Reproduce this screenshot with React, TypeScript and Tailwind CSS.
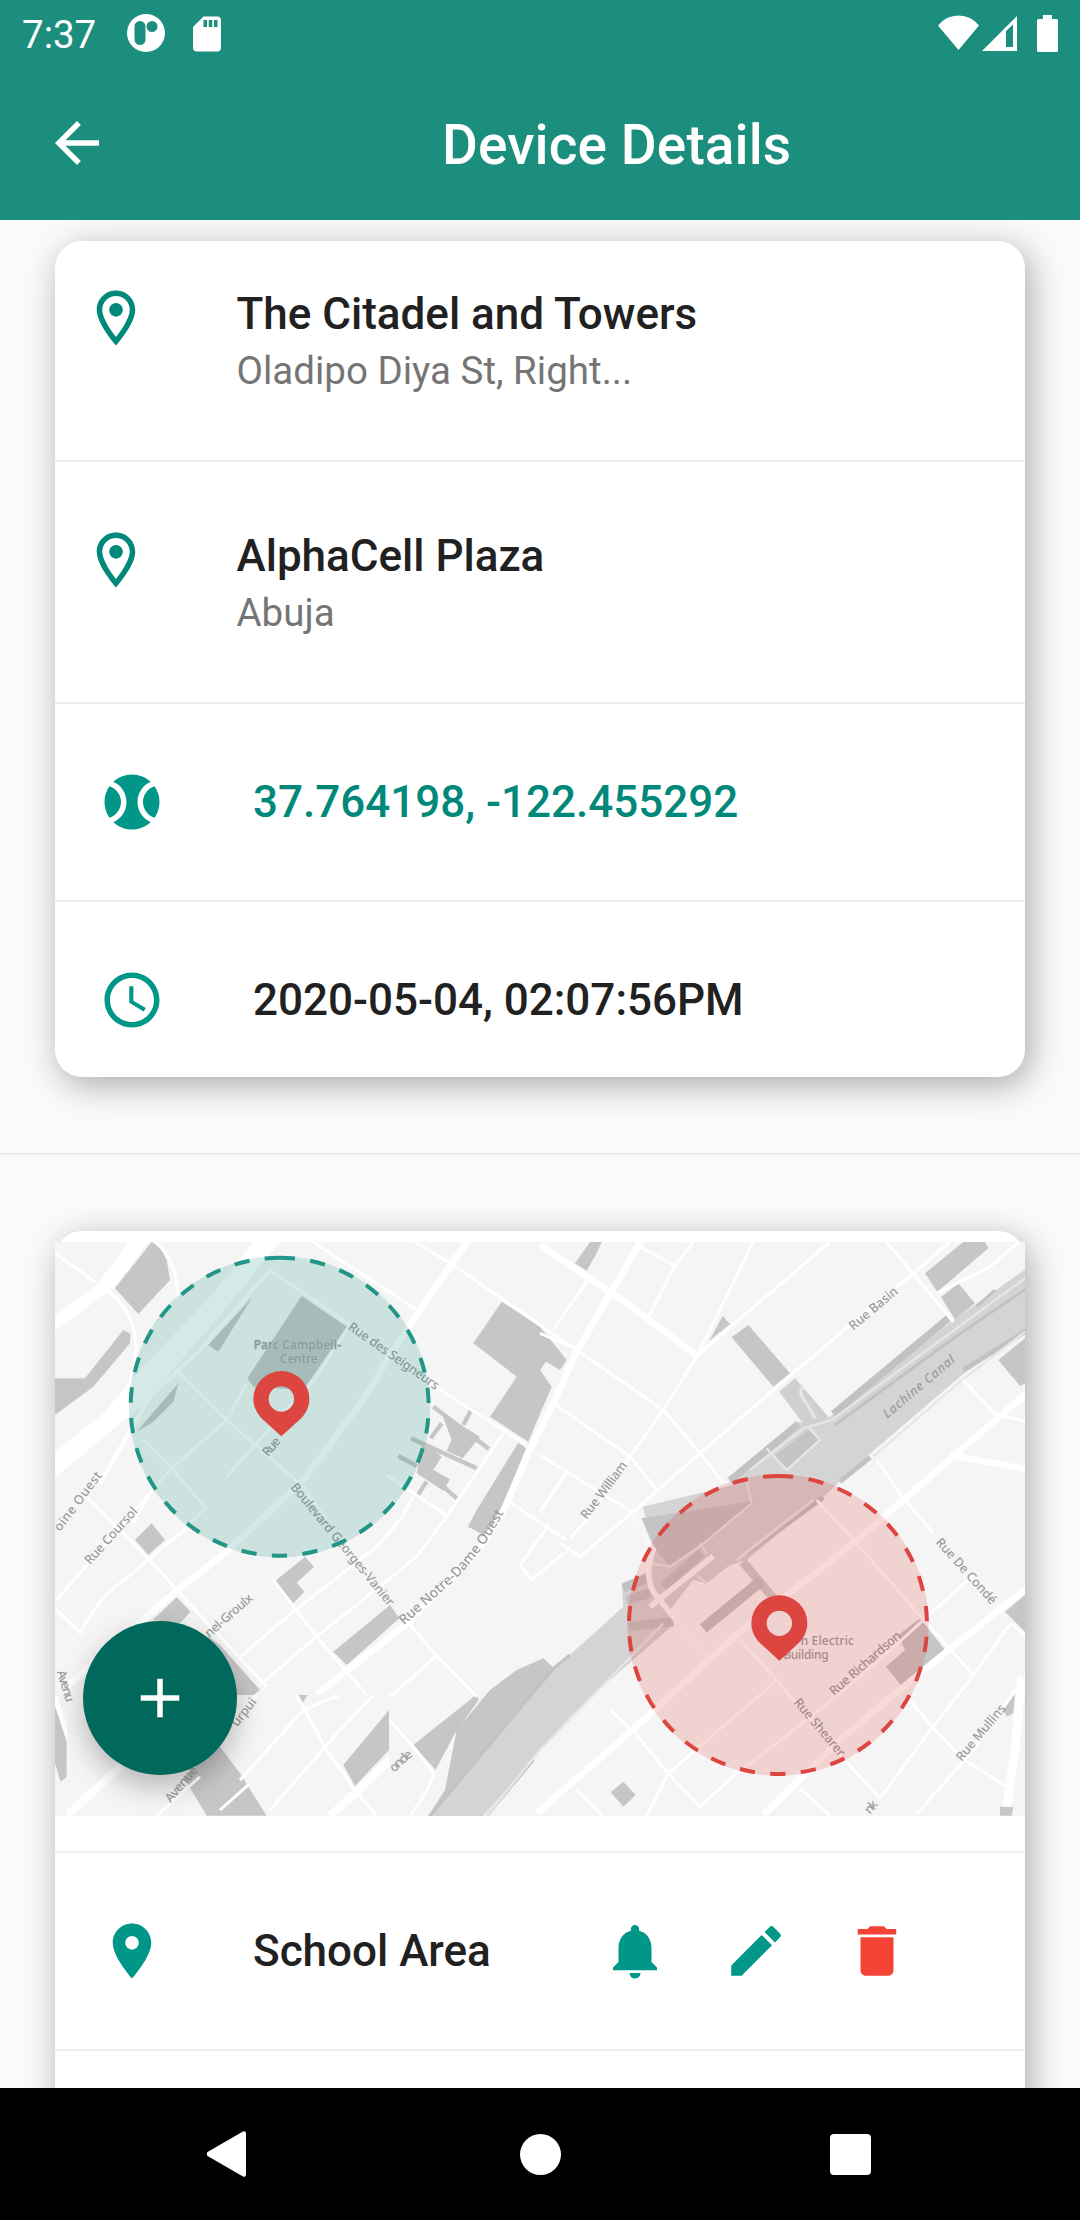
import type { ReactNode } from "react";
import {
  MdAccessTime,
  MdAdd,
  MdArrowBack,
  MdCreate,
  MdDelete,
  MdLocationOn,
  MdNotifications,
  MdOutlineLocationOn,
  MdSdCard,
  MdSportsBaseball,
} from "react-icons/md";

const CARD_SHADOW = "shadow-[5px_8px_34px_rgba(0,0,0,0.32)]";

function StatusBar() {
  return (
    <div className="flex h-[66px] items-center pl-[22px] pr-[22px]">
      <span className="mt-[3px] text-[38.5px] leading-[46px]">7:37</span>
      <svg className="ml-[30px] size-[40px]" viewBox="0 0 40 40">
        <path
          fill="currentColor"
          fillRule="evenodd"
          d="M20 1a19 19 0 1 0 0 38 19 19 0 0 0 0-38zM14 8a5.500 5.500 0 0 1 5.500 5.500v13a5.500 5.500 0 0 1-11 0v-13A5.500 5.500 0 0 1 14 8zM26 8a5.500 5.500 0 1 1 0 11 5.500 5.500 0 0 1 0-11z"
        />
      </svg>
      <MdSdCard className="ml-[20px] mt-[1px] size-[42px]" />
      <div className="grow" />
      <svg className="h-[37px] w-[121px]" viewBox="937 15 121 37" fill="currentColor">
        <path d="M938 25.500Q946 15.500 958.500 15.500T979 25.500L958.500 50z" />
        <path fillRule="evenodd" d="M982 51L1017 16V51zM1006 31V47h7V24.500z" />
        <path d="M1043 15h9v4h4.500q1.500 0 1.500 1.500v30q0 1.500-1.500 1.500h-18q-1.500 0-1.500-1.500v-30q0-1.500 1.500-1.500h4.500z" />
      </svg>
    </div>
  );
}

function Header() {
  return (
    <header className="relative z-10 h-[220px] bg-[#1c8e7e] text-white">
      <StatusBar />
      <div className="flex h-[154px] items-center pl-[44px]">
        <MdArrowBack className="size-[66px]" />
        <h1 className="ml-[332px] mt-[4px] text-[55px] font-medium leading-[64px] tracking-[0.1px]">Device Details</h1>
      </div>
    </header>
  );
}

function AddressRow({ title, detail, className }: { title: string; detail: string; className: string }) {
  return (
    <div className={`flex border-b-2 border-[#eeeeee] pl-[27.5px] ${className}`}>
      <MdOutlineLocationOn className="-mt-[3px] size-[66px] text-[#00897b]" />
      <div className="ml-[88px]">
        <p className="text-[44px] font-medium leading-[52px]">{title}</p>
        <p className="mt-[8px] text-[38.5px] leading-[46px] text-[#757575]">{detail}</p>
      </div>
    </div>
  );
}

function ItemRow({ icon, children, className }: { icon: ReactNode; children: ReactNode; className: string }) {
  return (
    <div className={`flex items-center pl-[44px] ${className}`}>
      {icon}
      {children}
    </div>
  );
}

const blocks = [
  "225,235 335,96 360,110 380,150 390,210 295,312",
  "45,505 135,505 250,360 272,372 270,400 160,530 45,615",
  "505,405 638,260 535,425",
  "290,665 415,520 400,575 340,635",
  "785,258 920,350 790,540 640,530 622,505",
  "1385,275 1500,350 1580,450 1560,480 1518,455 1500,480 1535,530 1505,600 1465,695 1350,620 1430,500 1300,400",
  "1205,610 1320,680 1268,745 1220,722 1235,690",
  "1150,695 1205,740 1180,780 1230,808 1210,842 1130,790",
  "1435,698 1458,715 1400,860 1345,975 1345,982 1284,950 1310,900",
  "335,940 375,990 325,1035 285,990",
  "410,1162 452,1205 420,1240 338,1230",
  "795,1040 822,1070 770,1118 793,1145 760,1180 703,1115",
  "1050,1185 1078,1225 920,1365 880,1325",
  "500,1275 540,1305 660,1440 640,1455 590,1455",
  "45,1490 80,1570 80,1700 62,1716 45,1660",
  "1308,1455 1316,1470 1245,1570 1187,1680 1120,1605",
  "1605,160 1650,96 1685,96 1670,130 1640,182",
  "2008,392 2048,318 2070,342",
  "2125,345 2250,490 2200,530 2075,382",
  "2655,190 2770,96 2835,96 2845,115 2692,245",
  "2755,220 2805,280 2745,328 2703,262",
  "2955,385 2955,520 2940,528 2875,450",
  "2640,1225 2715,1320 2590,1435 2538,1370 2595,1320 2575,1275",
  "2955,1155 2955,1265 2895,1205",
  "2925,1450 2920,1510 2900,1520 2890,1500",
  "1750,1715 1787,1755 1750,1790 1712,1747",
  "2880,1790 2920,1790 2915,1817 2880,1817",
];

const alleys =
  "M1180 590L1347 717M1293 600L1270 645M1205 640L1172 685M1113 685L1310 775M1075 738L1130 768M1160 815L1135 853M1205 825L1250 865";

const streets = [
  "M45 130L200 240Q290 310 288 420L268 540",
  "M345 96Q415 150 412 270",
  "M820 96L1130 300",
  "M690 180L930 345L1200 540L1460 705",
  "M690 180L620 260",
  "M930 345L830 500L560 800",
  "M395 465L560 630L720 770L790 830L860 930",
  "M620 520L560 630L395 775L330 850L280 940",
  "M310 690L395 775L495 890",
  "M1125 96L1240 165L1500 345L1610 420L1870 600L1985 735L2050 820",
  "M1650 200L1540 360M1800 110L1905 168L1825 320M1905 168L1960 96",
  "M2140 96L1970 440L1870 600L1770 740L1640 930L1590 985",
  "M1500 370L1620 420M1540 580L1770 740L1850 840M1500 735L1580 785L1500 905",
  "M2370 96L2060 360L1970 440",
  "M2730 96L2620 190L2400 370L2200 540L1980 730L1780 905L1620 1040L1560 1000",
  "M2540 96L2740 335",
  "M2955 80L2850 170L2690 250",
  "M1580 785L1775 905",
  "M2770 510L2865 612L2955 635",
  "M2510 750L2590 865L2680 970",
  "M2330 870L2450 1000L2660 1240L2800 1395",
  "M2100 1290L2210 1410L2400 1635L2520 1765",
  "M1710 1500L1785 1570L1885 1690L1985 1795",
  "M2610 1470L2680 1555L2765 1645L2900 1730",
  "M1610 1740L1685 1815",
  "M2280 1735L2370 1817",
  "M1980 1790L2090 1690L2210 1600L2400 1450L2540 1330L2800 1095",
  "M1820 1817L1885 1690L2060 1540L2210 1412",
  "M2520 1765L2675 1555L2800 1395L2912 1240",
  "M2630 1810L2690 1745L2800 1620L2930 1435",
  "M2955 1275L2912 1240",
  "M45 1195L120 1268Q180 1160 240 1120L420 970L500 890",
  "M130 850L330 1050L410 1140L680 1430",
  "M45 1175L180 1020L330 850",
  "M700 1110L830 1280L980 1455",
  "M1090 1220L1190 1338L1310 1460",
  "M1190 1338L1050 1460",
  "M600 1340L760 1205L1010 1010L1080 930L1120 860",
  "M660 1425L830 1280L1130 1040L1220 920L1390 670",
  "M1040 795L1225 920",
  "M1400 870L1580 990M1440 1065L1530 940M1440 1065L1475 1110L1570 1030",
  "M1047 1530L1120 1610L1180 1690Q1180 1720 1110 1817",
];

const tileBlocks = [
  "540,1610 600,1690 680,1817 500,1817 430,1700",
  "770,1455 803,1455 785,1482",
  "1047,1500 1047,1620 945,1728 910,1665",
];

const tileStreets = [
  "M770 1455L860 1620L945 1740L1010 1818",
  "M1000 1455L900 1560L690 1800",
  "M900 1455L790 1500L600 1710",
  "M350 1817L480 1700M540 1800L630 1720M650 1455L560 1560",
];

const avenues = [
  "M1285 90L1130 315L960 580L800 800L560 1025L400 1150L80 1430",
  "M1500 105L1720 252L1972 437",
  "M1805 90L1710 252L1610 425L1540 580L1460 740L1400 880Q1370 950 1290 1050L1090 1250L910 1390L830 1455",
  "M2960 550L2760 722L2590 870L2440 1000L2100 1265L1780 1558L1490 1810",
  "M2730 735L2960 778",
  "M2960 1135L2720 1325L2560 1455L2400 1590L2170 1815",
];

const streetLabels = [
  { text: "Rue des Seigneurs", x: 922, y: 356, turn: 35, width: 322 },
  { text: "Rue", x: 684, y: 742, turn: -50, width: 62 },
  { text: "Boulevard Georges-Vanier", x: 750, y: 832, turn: 50.5, width: 465 },
  { text: "oine Ouest", x: 60, y: 966, turn: -53, width: 212 },
  { text: "Rue Coursol", x: 150, y: 1066, turn: -48, width: 216 },
  { text: "nel-Groulx", x: 508, y: 1284, turn: -41, width: 176 },
  { text: "Rue William", x: 1640, y: 930, turn: -53, width: 205 },
  { text: "Rue Basin", x: 2440, y: 362, turn: -40, width: 178 },
  { text: "Rue De Condé", x: 2685, y: 998, turn: 48, width: 252 },
  { text: "Rue Richardson", x: 2382, y: 1458, turn: -41, width: 270 },
  { text: "Rue Shearer", x: 2260, y: 1478, turn: 50, width: 215 },
  { text: "Rue Mullins", x: 2765, y: 1656, turn: -50, width: 208 },
  { text: "Avenu", x: 50, y: 1385, turn: 73, width: 98 },
  { text: "urpui", x: 592, y: 1552, turn: -52, width: 96 },
  { text: "onde", x: 1062, y: 1688, turn: -42, width: 78 },
  { text: "Avenue", x: 392, y: 1780, turn: -50, width: 128 },
  { text: "nk", x: 2490, y: 1814, turn: -50, width: 40 },
];

function Pin({ x, y }: { x: number; y: number }) {
  return (
    <path
      transform={`translate(${x} ${y})`}
      fill="#dc4540"
      fillRule="evenodd"
      d="M0-84A84 84 0 0 0-84 0C-84 25-72 46-58 59L0 112L58 59C72 46 84 25 84 0A84 84 0 0 0 0-84zM0-38A38 38 0 1 1 0 38A38 38 0 1 1 0-38z"
    />
  );
}

/** A geofenced zone whose dashed outline starts at twelve o'clock. */
function Zone({ x, y, color }: { x: number; y: number; color: string }) {
  return (
    <g transform={`translate(${x} ${y})`}>
      <circle r="452" fill={color} fillOpacity="0.2" />
      <circle
        r="447"
        fill="none"
        stroke={color}
        strokeWidth="12"
        strokeDasharray="46 46.08"
        transform="rotate(-90)"
      />
    </g>
  );
}

function ZoneMap() {
  return (
    <svg className="block h-[574px] w-[970px]" viewBox="45 96 2910 1722" fontFamily='"Noto Sans", sans-serif'>
      <defs>
        <path id="notre-dame" d="M1092 1246L1235 1118Q1325 1035 1398 895" />
        <clipPath id="tile">
          <rect x="80" y="1455" width="967" height="363" />
        </clipPath>
        <filter id="soften" x="0" y="0" width="1" height="1">
          <feGaussianBlur stdDeviation="2.200" />
        </filter>
      </defs>
      <rect x="45" y="96" width="2910" height="1722" fill="#f5f5f5" />

      <g filter="url(#soften)">
        <rect x="0" y="50" width="3000" height="1820" fill="#f5f5f5" />

        {/* canal and its banks */}
        <polygon
          fill="#d4d4d4"
          points="2975,165 2740,330 2370,620 2300,640 2270,635 2065,810 2080,825 1808,890 1840,1010 1820,1090 1745,1120 1750,1190 1590,1335 1540,1375 1150,1840 1310,1840 1590,1520 1710,1410 1900,1245 1890,1200 1960,1110 2000,1120 2070,1065 2120,1050 2350,860 2500,722 2770,492 2975,350"
        />
        <polygon
          fill="#c6c6c6"
          points="1510,1345 1545,1378 1170,1818 1150,1840 1215,1740 1250,1560 1350,1440 1430,1380"
        />
        <polygon fill="#c4c4c4" points="1805,925 2150,872 2080,930 1890,1070 1840,1010" />
        <polygon fill="#c4c4c4" points="2200,740 2305,660 2335,690 2240,778" />
        <polygon fill="#d0d0d0" points="2265,505 2365,620 2300,655 2218,545" />
        <g fill="none" stroke="#c2c2c2">
          <path strokeWidth="22" d="M2070 812L2275 642M2380 612L2725 325" />
          <path strokeWidth="9" d="M2385 645L2740 385L2975 225M2810 290L2865 240M1590 1335L1540 1375L1170 1818M1480 1650L1340 1818" />
          <path strokeWidth="15" d="M2120 1030L2350 862M2400 815L2490 742M2960 362L2770 480" />
          <path strokeWidth="26" stroke="#cccccc" d="M2108 1055L2205 1170" />
          <path strokeWidth="32" d="M1990 1255L2165 1112" />
          <path strokeWidth="28" d="M1870 1130L1985 1030M1765 1250L1900 1235M1750 1135L1830 1100M1760 1170L1830 1150" />
        </g>
        <g fill="none" stroke="#e6e6e6" strokeWidth="7">
          <path d="M2375 630L2975 190M2290 655L2375 630M2180 715L2240 780L2340 690L2305 650M2130 780L2290 655" />
          <path d="M2120 815L2135 880L1985 1005L1890 1070L1830 1060M1980 1000L2000 1030M1970 1095L2000 1120M2975 350L2760 515L2500 740M1870 1240L1500 1620L1340 1818" />
          <path d="M2290 530Q2270 545 2300 580L2325 625" strokeWidth="9" />
          <path d="M2090 1050L2320 870" strokeWidth="9" />
        </g>
        <path
          d="M1765 900L1840 1020Q1805 1110 1855 1165L1920 1245L2010 1360M1830 1190L2020 1038"
          fill="none"
          stroke="#f8f8f8"
          strokeWidth="17"
        />

        {/* motorway */}
        <polygon fill="#ffffff" points="20,335 170,225 265,96 300,50 360,50 325,96 220,235 20,380" />
        <polygon fill="#ffffff" points="20,745 190,610 300,480 520,250 640,96 670,50 750,50 720,96 520,340 300,590 20,825" />
        <path d="M180 820L330 560L480 420L690 180" fill="none" stroke="#ffffff" strokeWidth="13" />

        <g fill="#c6c6c6">
          {blocks.map((points) => (
            <polygon key={points} points={points} />
          ))}
        </g>
        <path d={alleys} fill="none" stroke="#c6c6c6" strokeWidth="13" />

        <g fill="none" stroke="#ffffff" strokeLinejoin="round">
          {streets.map((d) => (
            <path key={d} d={d} strokeWidth="9" />
          ))}
          {avenues.map((d) => (
            <path key={d} d={d} strokeWidth="20" />
          ))}
          <path d="M2945 1400L2925 1620L2900 1790" strokeWidth="26" />
          <path d="M45 1460L90 1600L130 1700" strokeWidth="16" />
        </g>

        <g clipPath="url(#tile)">
          <rect x="80" y="1455" width="967" height="363" fill="#f5f5f5" />
          {tileBlocks.map((points) => (
            <polygon key={points} points={points} fill="#c6c6c6" />
          ))}
          <g fill="none" stroke="#ffffff" strokeWidth="9">
            {tileStreets.map((d) => (
              <path key={d} d={d} />
            ))}
            <path d="M1060 1640L940 1755L870 1818M80 1818L250 1660" strokeWidth="24" />
          </g>
        </g>
      </g>

      <g fill="#9c9c9c" fontSize="38" fontWeight="500">
        {streetLabels.map((label) => (
          <text
            key={`${label.text}-${label.x}`}
            transform={`translate(${label.x} ${label.y}) rotate(${label.turn})`}
            textLength={label.width}
          >
            {label.text}
          </text>
        ))}
        <text fontSize="41">
          <textPath href="#notre-dame" textLength="455">
            Rue Notre-Dame Ouest
          </textPath>
        </text>
        <text transform="translate(2542 626) rotate(-40)" textLength="268" fontStyle="italic">
          Lachine Canal
        </text>
        <g fontSize="35" stroke="#cfcfcf" strokeWidth="3" paintOrder="stroke">
          <text x="641" y="416" textLength="262">
            Parc Campbell-
          </text>
          <text x="720" y="458" textLength="112">
            Centre
          </text>
        </g>
        <text x="2282" y="1306" fontSize="36" textLength="160">
          n Electric
        </text>
        <text x="2230" y="1348" fontSize="36" textLength="136">
          Building
        </text>
      </g>

      <Zone x={719} y={590} color="#219686" />
      <Zone x={2214} y={1245} color="#dc4540" />
      <Pin x={724} y={567} />
      <Pin x={2218} y={1240} />
    </svg>
  );
}

function NavigationBar() {
  return (
    <nav className="relative z-10 flex h-[132px] items-center justify-between bg-black pl-[206px] pr-[209px]">
      <svg className="h-[46px] w-[40px]" viewBox="0 0 40 46">
        <path fill="#ffffff" d="M1.500 21Q0 23 1.500 25L37 45.500Q40 46.500 40 43.500V2.500Q40-.5 37 .5z" />
      </svg>
      <div className="ml-[65px] mr-[60px] size-[41px] rounded-full bg-white" />
      <div className="size-[41px] rounded-[4px] bg-white" />
    </nav>
  );
}

export default function App() {
  return (
    <div className="flex h-[2220px] w-[1080px] flex-col overflow-hidden bg-[#fafafa] font-['Roboto',sans-serif] text-[#212121]">
      <Header />

      <main className="h-[1868px] overflow-hidden">
        <section className={`mx-[55px] mt-[21px] h-[836px] rounded-[27px] bg-white ${CARD_SHADOW}`}>
          <AddressRow className="h-[221px] pt-[47px]" title="The Citadel and Towers" detail="Oladipo Diya St, Right..." />
          <AddressRow className="h-[242px] pt-[68px]" title="AlphaCell Plaza" detail="Abuja" />
          <ItemRow
            className="h-[198px] border-b-2 border-[#eeeeee]"
            icon={<MdSportsBaseball className="size-[66px] text-[#009688]" />}
          >
            <p className="ml-[88px] text-[44px] font-medium leading-[52px] text-[#00897b]">37.764198, -122.455292</p>
          </ItemRow>
          <ItemRow className="h-[196px]" icon={<MdAccessTime className="size-[66px] text-[#009688]" />}>
            <p className="ml-[88px] text-[44px] font-medium leading-[52px]">2020-05-04, 02:07:56PM</p>
          </ItemRow>
        </section>

        <hr className="mt-[76px] border-t-2 border-[#ebebeb]" />

        <section className={`relative mx-[55px] mt-[76px] h-[1100px] rounded-t-[27px] bg-white pt-[11px] ${CARD_SHADOW}`}>
          <ZoneMap />
          <button
            aria-label="Add zone"
            className="absolute left-[27.5px] top-[390px] flex size-[154px] items-center justify-center rounded-full bg-[#00695c] text-white shadow-[0_12px_28px_rgba(0,0,0,0.26)]"
          >
            <MdAdd className="size-[66px]" />
          </button>
          <div className="mt-[35px] border-t-2 border-[#eeeeee]" />
          <ItemRow
            className="h-[198px] border-b-2 border-[#eeeeee]"
            icon={<MdLocationOn className="size-[66px] text-[#009688]" />}
          >
            <p className="ml-[88px] w-[349px] text-[44px] font-medium leading-[52px]">School Area</p>
            <div className="flex gap-[55px] text-[#009688]">
              <MdNotifications className="size-[66px]" />
              <MdCreate className="size-[66px]" />
              <MdDelete className="size-[66px] text-[#f44336]" />
            </div>
          </ItemRow>
        </section>
      </main>

      <NavigationBar />
    </div>
  );
}
